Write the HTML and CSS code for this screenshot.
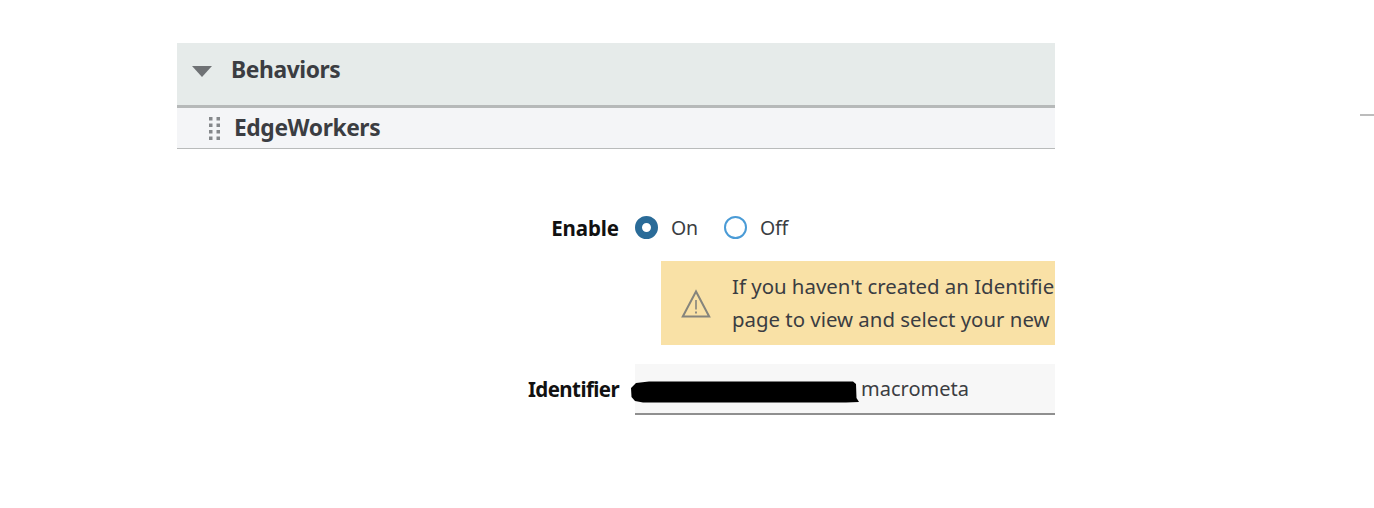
FILE: index.html
```html
<!DOCTYPE html>
<html lang="en">
<head>
<meta charset="utf-8">
<title>Behaviors</title>
<link rel="stylesheet" href="styles.css">
</head>
<body>
<div class="edge-dash"></div>
<main class="panel">
  <header class="section-head">
    <svg class="caret" width="20" height="12" viewBox="0 0 20 12"><path d="M0 1h20L10 12z" fill="#6f7275"/></svg>
    <h2 class="section-title">Behaviors</h2>
  </header>
  <div class="behavior-row">
    <svg class="grip" width="12" height="24" viewBox="0 0 12 24" fill="#85888b">
      <rect x="0" y="0" width="3.5" height="3.5"/><rect x="7.5" y="0" width="3.5" height="3.5"/>
      <rect x="0" y="6.5" width="3.5" height="3.5"/><rect x="7.5" y="6.5" width="3.5" height="3.5"/>
      <rect x="0" y="13" width="3.5" height="3.5"/><rect x="7.5" y="13" width="3.5" height="3.5"/>
      <rect x="0" y="19.5" width="3.5" height="3.5"/><rect x="7.5" y="19.5" width="3.5" height="3.5"/>
    </svg>
    <h3 class="behavior-title">EdgeWorkers</h3>
  </div>
  <form class="form">
    <div class="field-row enable-row">
      <span class="label label-enable">Enable</span>
      <div class="radios">
        <span class="radio radio-on"></span><span class="radio-text">On</span>
        <span class="radio radio-off"></span><span class="radio-text">Off</span>
      </div>
    </div>
    <div class="notice">
      <svg class="warn" width="30" height="30" viewBox="0 0 30 30" fill="none" stroke="#85847c" stroke-width="2">
        <path d="M15 2.5 1.8 27.5h26.4z" stroke-linejoin="miter"/>
        <path d="M15 11v9.5" stroke-width="1.6"/>
        <path d="M15 22.4v2" stroke-width="1.8"/>
      </svg>
      <p class="notice-text">If you haven't created an Identifie<br>page to view and select your new</p>
    </div>
    <div class="field-row identifier-row">
      <span class="label label-identifier">Identifier</span>
      <div class="input">
        <svg class="redaction" width="228" height="22" viewBox="0 0 228 22"><path d="M5 2 18 0.5 222 0.5 225 3 225.5 17 228 21 215 21.5 12 21.5 4 20 0.5 16 0 7z" fill="#000"/></svg>
        <span class="input-value">macrometa</span>
      </div>
    </div>
  </form>
</main>
</body>
</html>
```
FILE: styles.css
```css
* { box-sizing: border-box; }
html, body { margin: 0; padding: 0; background: #fff; }
body {
  height: 508px;
  overflow: hidden;
  font-family: "Noto Sans", "Open Sans", "Liberation Sans", sans-serif;
  color: #3b3d42;
  padding: 43px 0 0 177px;
  position: relative;
}
.edge-dash {
  position: absolute;
  left: 1360px;
  top: 114px;
  width: 14px;
  height: 2px;
  background: #bcbcbc;
}
.panel { width: 878px; }
.section-head {
  height: 65px;
  background: #e6ebea;
  border-bottom: 3px solid #b6b9b9;
  display: flex;
  align-items: center;
  padding: 0 0 3px 15px;
}
.caret { margin-right: 19px; margin-bottom: 4px; }
.section-title {
  margin: 0 0 5px;
  font-size: 22.8px;
  font-weight: 700;
  line-height: 1;
  letter-spacing: -0.4px;
}
.behavior-row {
  height: 41px;
  background: #f4f5f7;
  border-bottom: 1px solid #b9bbbb;
  display: flex;
  align-items: center;
  padding-left: 32px;
}
.grip { margin-right: 13px; margin-top: 1px; }
.behavior-title {
  margin: 0;
  font-size: 22.8px;
  font-weight: 700;
  line-height: 1;
  letter-spacing: -0.4px;
}
.form { padding-top: 60px; }
.field-row { display: flex; align-items: center; }
.label {
  width: 442px;
  text-align: right;
  font-size: 20.5px;
  font-weight: 700;
  color: #111;
  line-height: 1;
}
.label-enable { letter-spacing: -0.1px; }
.label-identifier { letter-spacing: -0.6px; }
.enable-row { height: 38px; }
.radios { display: flex; align-items: center; margin-left: 16px; margin-top: -1px; }
.radio {
  width: 23px;
  height: 23px;
  border-radius: 50%;
  display: block;
}
.radio-on { background: #fff; border: 7px solid #2a6b98; }
.radio-off { background: #fff; border: 2px solid #4a9bd6; }
.radio-text {
  font-size: 19.5px;
  line-height: 1;
  margin: 0 26px 0 13px;
  letter-spacing: -0.2px;
  color: #3b3d42;
}
.notice {
  margin: 14px 0 0 484px;
  height: 84px;
  background: #f9e1a6;
  display: flex;
  align-items: center;
  padding-left: 20px;
  overflow: hidden;
}
.warn { flex: none; margin-right: 21px; margin-top: 2px; }
.notice-text {
  margin: 0;
  font-size: 20.4px;
  line-height: 33px;
  white-space: nowrap;
  color: #3b3d42;
}
.identifier-row { margin-top: 19px; height: 51px; }
.input {
  position: relative;
  margin-left: 16px;
  flex: 1;
  height: 51px;
  background: #f7f7f7;
  border-bottom: 2px solid #8f8f8f;
  display: flex;
  align-items: center;
  padding-left: 226px;
}
.redaction {
  position: absolute;
  left: -4px;
  top: 17px;
}
.input-value { font-size: 20px; line-height: 1; color: #3b3d42; }
```
